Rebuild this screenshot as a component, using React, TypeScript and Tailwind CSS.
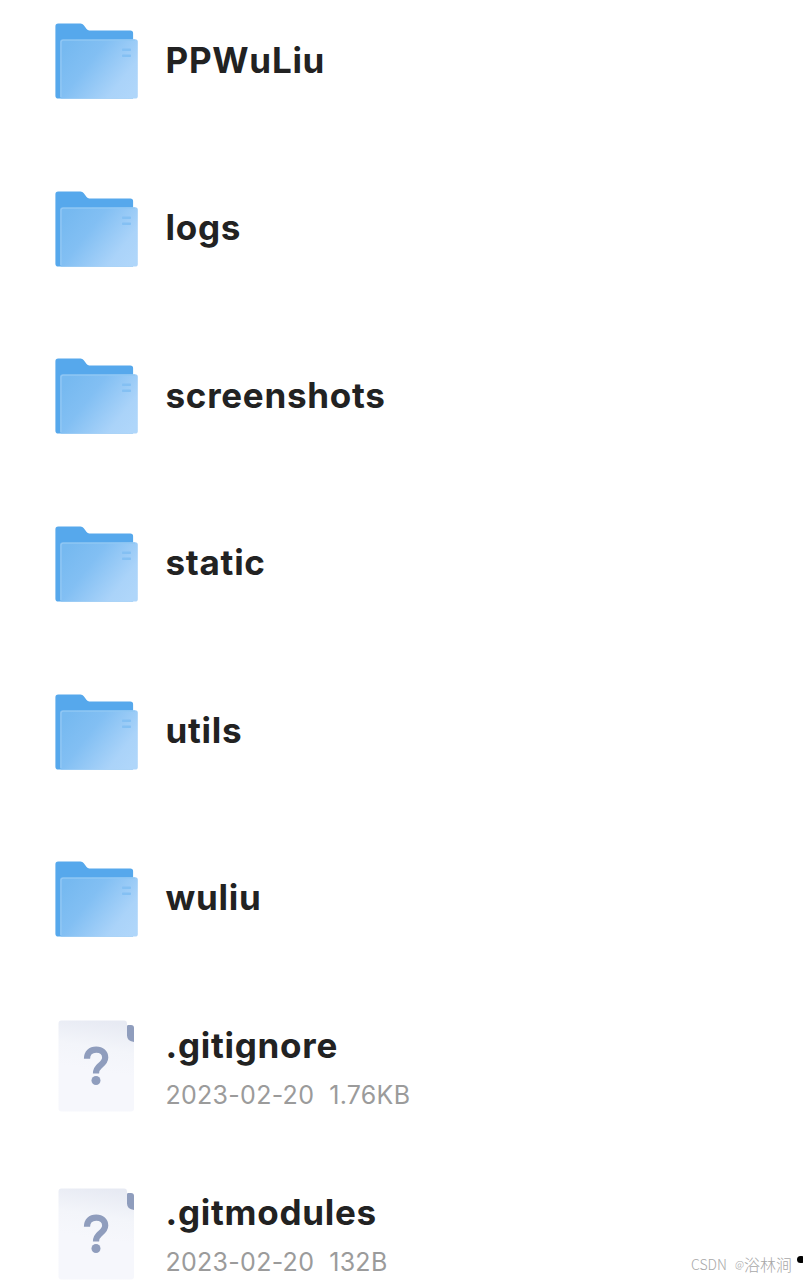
type Entry = {
  name: string;
  date?: string;
  size?: string;
};

const entries: Entry[] = [
  { name: "PPWuLiu" },
  { name: "logs" },
  { name: "screenshots" },
  { name: "static" },
  { name: "utils" },
  { name: "wuliu" },
  { name: ".gitignore", date: "2023-02-20", size: "1.76KB" },
  { name: ".gitmodules", date: "2023-02-20", size: "132B" },
];

function FolderIcon() {
  return (
    <svg className="w-[84px] h-[76px]" viewBox="0 0 84 76" fill="none">
      <defs>
        <linearGradient id="folder-front" x1="12" y1="22" x2="76" y2="72" gradientUnits="userSpaceOnUse">
          <stop offset="0" stopColor="#76b9f0" />
          <stop offset="0.35" stopColor="#82bff3" />
          <stop offset="0.8" stopColor="#aad3f9" />
          <stop offset="1" stopColor="#afd6fa" />
        </linearGradient>
      </defs>
      <path
        d="M3.2 0.6H25.5Q27.6 0.6 28.8 2.3L31.6 6Q32.6 7.4 34.3 7.4H75.3Q78.1 7.4 78.1 10.2V75.6H3.2Q0.4 75.6 0.4 72.8V3.4Q0.4 0.6 3.2 0.6Z"
        fill="#56a8ec"
      />
      <rect x="5" y="16.3" width="77.8" height="59.3" rx="2.6" fill="url(#folder-front)" />
      <path d="M6 74V19.3Q6 17.1 8.2 17.1H80" stroke="#90c7f4" strokeWidth="1.4" />
      <rect x="67" y="25.4" width="9" height="2.6" rx="0.8" fill="#84c0f3" />
      <rect x="67" y="31.4" width="9" height="2.6" rx="0.8" fill="#84c0f3" />
    </svg>
  );
}

function UnknownFileIcon() {
  return (
    <svg className="w-[76px] h-[92px]" viewBox="0 0 76 92" fill="none">
      <defs>
        <linearGradient id="file-body" x1="42" y1="0" x2="34" y2="50" gradientUnits="userSpaceOnUse">
          <stop offset="0" stopColor="#e7eaf3" />
          <stop offset="0.55" stopColor="#f3f5fa" />
          <stop offset="1" stopColor="#f6f7fc" />
        </linearGradient>
      </defs>
      <path
        d="M3.5 0.4H66Q69 0.4 69 3.4V15Q69 22 76 22V88.5Q76 91.4 73 91.4H3.5Q0.5 91.4 0.5 88.4V3.4Q0.5 0.4 3.5 0.4Z"
        fill="url(#file-body)"
      />
      <path d="M69 6.4Q69 5 70.4 5H73Q76 5 76 8V22Q69 21.4 69 15.5Z" fill="#8f9dbd" />
      <path d="M29 38.8C29 33 32.7 29.6 38.2 29.6C43.7 29.6 47.2 32.8 47.2 37.6C47.2 41.6 44.8 43.4 42 45.7C39.2 48 38 49.6 38 53.6" stroke="#8f9dbd" strokeWidth="6.2" />
      <circle cx="38" cy="60.5" r="4.5" fill="#8f9dbd" />
    </svg>
  );
}

function EntryRow({ entry }: { entry: Entry }) {
  return (
    <li className="h-[167.6px] shrink-0 flex items-center">
      <div className="w-[84px] shrink-0 flex justify-center">
        {entry.date ? <span className="-mt-[1.4px] -ml-[1.6px]"><UnknownFileIcon /></span> : <FolderIcon />}
      </div>
      <div className="ml-[26.5px]">
        <p className="text-[35px] leading-[42px] font-bold tracking-[0.73px] text-[#222222] -mt-[3.6px]">{entry.name}</p>
        {entry.date && (
          <p className="mt-[14px] -mb-[3px] flex gap-[15px] text-[25px] leading-[30px] tracking-[0.28px] text-[#9b9b9b]">
            <span>{entry.date}</span>
            <span>{entry.size}</span>
          </p>
        )}
      </div>
    </li>
  );
}

export default function App() {
  return (
    <main className="relative w-[803px] h-[1280px] overflow-hidden bg-white font-['Inter',sans-serif]">
      <ul className="-mt-[22.5px] pl-[55px] flex flex-col">
        {entries.map((entry) => (
          <EntryRow key={entry.name} entry={entry} />
        ))}
      </ul>
      <p className="absolute left-[691px] top-[1254px] flex items-center whitespace-nowrap text-[16px] leading-[20px] font-light text-[#a8a8a8] font-['Noto_Sans_CJK_SC',sans-serif]">
        <span className="w-[44px] text-[14px]">CSDN</span>
        <span className="w-[9px] text-[10px]">@</span>
        <span>浴林涧</span>
      </p>
      <span className="absolute left-[797px] top-[1256px] w-2 h-[7px] rounded-full bg-black" />
    </main>
  );
}
